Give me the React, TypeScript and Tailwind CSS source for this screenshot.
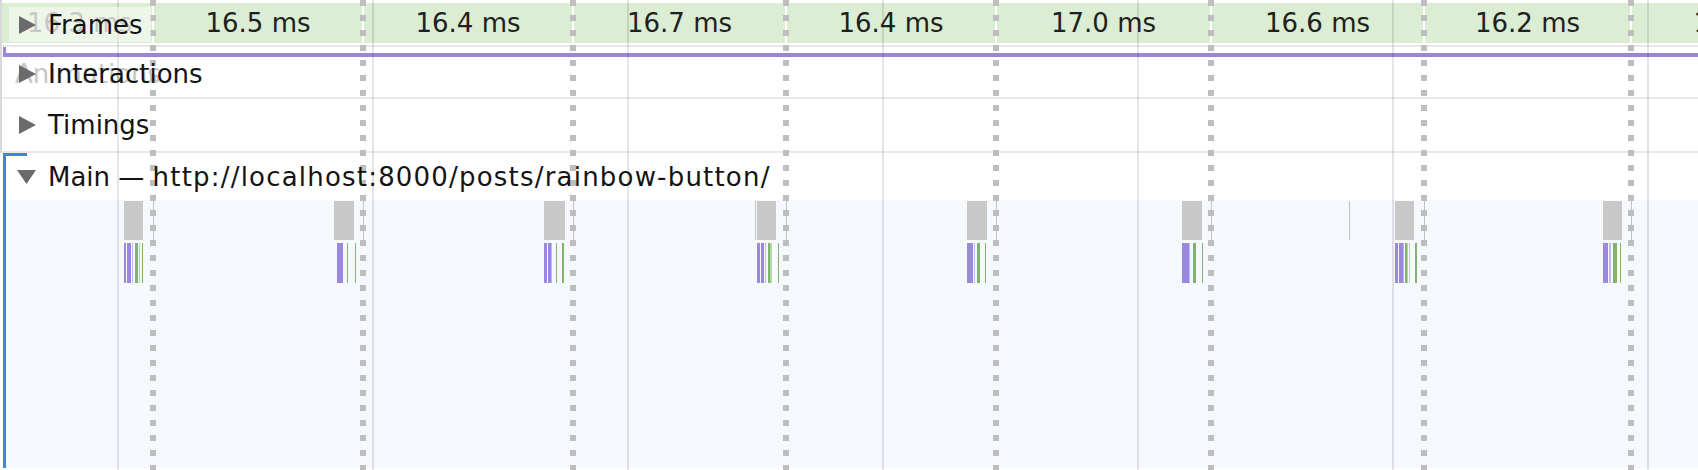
import React from 'react';

// timeline positions (px) — frame boundaries, 20ms grid, and main-thread activity
const DIVIDERS = [153, 363, 573, 786, 996, 1211, 1424, 1631];
const FRAME_MS = ['16.5', '16.4', '16.7', '16.4', '17.0', '16.6', '16.2'];
const GRID = [118, 373, 628, 883, 1138, 1393, 1648];
const BLOCKS: [number, number][] = [
    [124, 19], [334, 20], [544, 21], [757, 19], [967, 20], [1182, 20], [1395, 19], [1603, 19],
];
const THIN_MARKS = [755, 1349];

const P = '#9a87df';
const LP = '#c3b8ee';
const G = '#80b46c';
const LG = '#b5d6a8';

type Bar = [number, number, string];

const BARS: Bar[] = [
    [124, 2, P], [126.7, 4.3, P], [132, 1.3, LP], [134.7, 3.6, G], [139, 1, LG], [142, 1.3, G],
    [337, 2.5, P], [340, 3, P], [346.5, 1.5, G], [355, 1.3, G],
    [544, 3, P], [547.5, 3, P], [551, 1, LP], [555.5, 1.5, G], [562, 1.5, G],
    [757, 3, P], [760.5, 3.5, P], [764.5, 1.5, LP], [768, 1.5, G], [770, 1.5, LG], [777.5, 1.3, G],
    [967, 2.5, P], [970, 3, P], [973.5, 1.5, LP], [977, 3, G], [985, 1.3, G],
    [1182, 2.5, P], [1185, 3.5, P], [1189, 1, LP], [1193, 3, G], [1202, 1.3, G],
    [1395, 3, P], [1398.5, 4, P], [1403, 1.2, LP], [1405, 1.5, G], [1407, 1.2, LG], [1409, 1, LG], [1415, 1.5, G],
    [1603, 5, P], [1608.5, 1, LP], [1610, 1, LP], [1613, 3.5, G], [1620, 1.3, G],
];

// main content starts at x=6 (after the blue track bracket)
const MAIN_X = 6;

function Disclosure({ open }: { open?: boolean }) {
    if (open) {
        return (
            <svg width="19" height="16" viewBox="0 0 19 16" className="shrink-0">
                <polygon points="0,1 19,1 9.5,15" fill="#6b6b6b" />
            </svg>
        );
    }
    return (
        <svg width="17" height="18" viewBox="0 0 17 18" className="shrink-0">
            <polygon points="0,0 17,9 0,18" fill="#6b6b6b" />
        </svg>
    );
}

function TrackLabel({ text, open }: { text: React.ReactNode; open?: boolean }) {
    return (
        <div className="relative z-20 flex items-center gap-[12px] text-[#141414]">
            <Disclosure open={open} />
            <span className="whitespace-nowrap leading-none">{text}</span>
        </div>
    );
}

function FramesRow() {
    return (
        <div className="relative h-[47px] border-b-2 border-[#e8e8e8] pt-[3px]">
            <div className="flex h-[40px]">
                <div className="flex w-[150px] shrink-0 items-center bg-[#dbedd3] pl-[25px] text-[#8f8f8f]">
                    <span className="whitespace-nowrap leading-none">16.3 ms</span>
                </div>
                {FRAME_MS.map((ms, i) => (
                    <div
                        key={i}
                        className="flex shrink-0 items-center justify-center border-l-2 border-white bg-[#dbedd3] text-[#202020]"
                        style={{ width: DIVIDERS[i + 1] - DIVIDERS[i] }}
                    >
                        <span className="whitespace-nowrap leading-none">{ms} ms</span>
                    </div>
                ))}
                <div className="flex w-[230px] shrink-0 items-center justify-center border-l-2 border-white bg-[#dbedd3] text-[#202020]">
                    <span className="whitespace-nowrap leading-none">16.6 ms</span>
                </div>
            </div>

            {/* track label floats over the first frame */}
            <div className="absolute left-[7px] top-[7px] z-20 flex h-[35px] items-center bg-white/50 pl-[10px] pr-[8px]">
                <TrackLabel text="Frames" />
            </div>
        </div>
    );
}

function InteractionsRow() {
    return (
        <div className="relative flex h-[52px] items-center border-b-2 border-[#e8e8e8] pl-[17px]">
            {/* selection bracket */}
            <div className="absolute left-[1px] right-0 top-0 h-[10px] border-b-4 border-l-[3px] border-[#9985dc]" />
            <span className="absolute left-[13px] top-[14px] whitespace-nowrap leading-none text-[#c6c6c6]">Animations</span>
            <div className="pt-[4px]">
                <TrackLabel text="Interactions" />
            </div>
        </div>
    );
}

function TimingsRow() {
    return (
        <div className="flex h-[54px] items-center border-b-2 border-[#e8e8e8] pl-[17px]">
            <TrackLabel text="Timings" />
        </div>
    );
}

function MainTrack() {
    return (
        <div className="relative ml-[3px] flex h-[315px] flex-col border-l-[3px] border-[#4e7fd7]">
            <div className="absolute left-[-3px] top-0 h-[3px] w-[24px] bg-[#4e7fd7]" />
            <div className="flex h-[47px] items-center bg-white pl-[11px]">
                <TrackLabel
                    open
                    text={
                        <>
                            Main — <span className="tracking-[1.2px]">http://localhost:8000/posts/rainbow-button/</span>
                        </>
                    }
                />
            </div>
            <div className="relative flex-1 bg-[#f5f8fd]">
                {BLOCKS.map(([x, w], i) => (
                    <div
                        key={i}
                        className="absolute top-[1px] h-[39px] bg-[#c8c8c8]"
                        style={{ left: x - MAIN_X, width: w }}
                    />
                ))}
                {[...DIVIDERS, ...THIN_MARKS].map((x, i) => (
                    <div
                        key={i}
                        className="absolute top-[1px] h-[39px] w-px bg-[#c2c2c2]"
                        style={{ left: x - MAIN_X }}
                    />
                ))}
                {BARS.map(([x, w, c], i) => (
                    <div
                        key={i}
                        className="absolute top-[43px] h-[40px]"
                        style={{ left: x - MAIN_X, width: w, backgroundColor: c }}
                    />
                ))}
            </div>
        </div>
    );
}

function TimelineOverlay() {
    return (
        <div className="pointer-events-none absolute inset-0 z-10">
            {GRID.map((x) => (
                <div key={x} className="absolute bottom-0 top-0 w-[2px] bg-black/10" style={{ left: x - 1 }} />
            ))}
            {DIVIDERS.map((x) => (
                <div
                    key={x}
                    className="absolute bottom-0 top-0 w-[6px] bg-[repeating-linear-gradient(to_bottom,#bebebe_0px,#bebebe_6px,transparent_6px,transparent_15px)]"
                    style={{ left: x - 3 }}
                />
            ))}
        </div>
    );
}

export default function App() {
    return (
        <div className="relative h-[470px] w-[1698px] overflow-hidden bg-white font-['DejaVu_Sans',sans-serif] text-[26px]">
            <div className="border-l-2 border-[#d9d9d9]">
                <FramesRow />
                <InteractionsRow />
                <TimingsRow />
            </div>
            <MainTrack />
            <TimelineOverlay />
        </div>
    );
}
